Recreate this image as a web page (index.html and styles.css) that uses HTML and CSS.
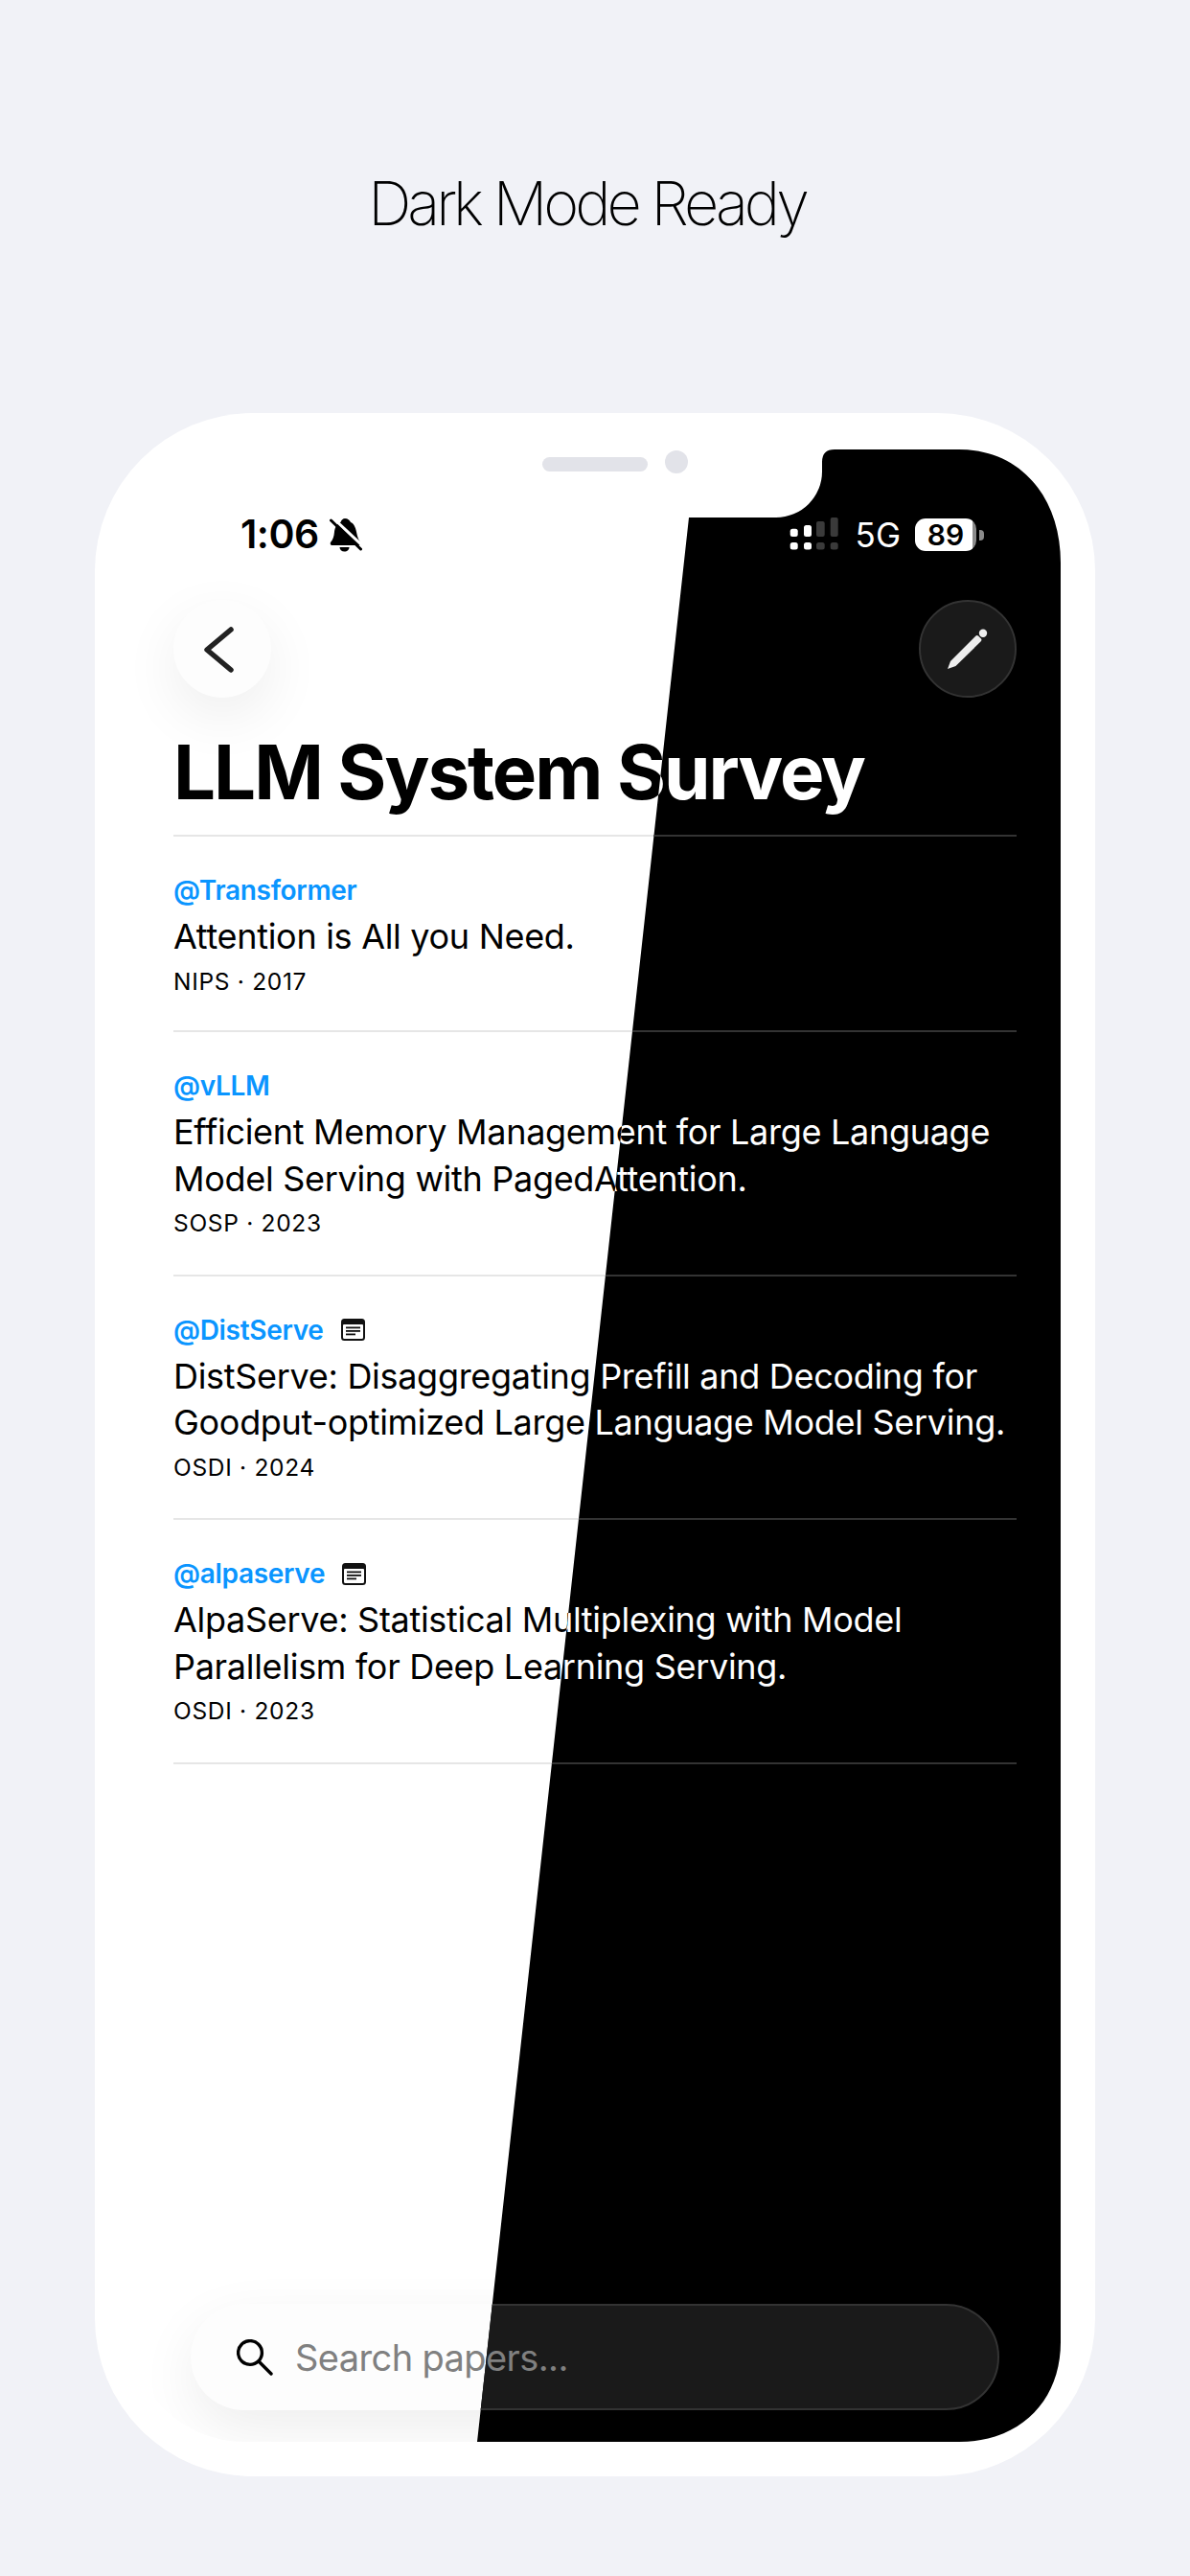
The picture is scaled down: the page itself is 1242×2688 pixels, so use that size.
FILE: index.html
```html
<!DOCTYPE html>
<html lang="en">
<head>
    <meta charset="UTF-8">
    <title>Dark Mode Ready</title>
    <link rel="stylesheet" href="styles.css">
</head>
<body>

    <h1 class="headline">Dark Mode Ready</h1>

    <div class="phone">
        <div class="speaker"></div>
        <div class="camera"></div>

        <!-- Light half -->
        <div class="screen light">
            <div class="status-bar">
                <div class="status-left">
                    <span class="clock">1:06</span>
                    <svg class="bell" viewBox="0 0 34 36"><path d="M16 1c3 0 5 2 6 4 3 1 5 5 6 10 1 5 2 8 4 11 .7 1.500 0 3-1.500 3H2.500C1 29 .3 27.500 1 26c2.500-3 3.500-6 4-11 .5-5 3-9 6.500-10 .5-2 2.500-4 4.500-4zM10.500 31h10c0 2.500-2 4.500-5 4.500s-5-2-5-4.500z"/><path class="bell-cut" d="M3.500 .5 35.500 30.500"/><path class="bell-slash" d="M1.500 3 32.500 33"/></svg>
                </div>
                <div class="status-right">
                    <svg class="signal" viewBox="0 0 51 35"><rect x="0.700" y="11.700" width="8" height="8.300" rx="2.500"/><rect x="15" y="8" width="8" height="12" rx="2.500"/><rect x="0.700" y="26" width="8" height="7.500" rx="2.500"/><rect x="15" y="26" width="8" height="7.500" rx="2.500"/><g class="signal-off"><rect x="28" y="4" width="8.700" height="16" rx="2"/><rect x="42.700" y="0" width="8" height="20" rx="2"/><rect x="28" y="26" width="8.700" height="7.500" rx="2.500"/><rect x="42.700" y="26" width="8" height="7.500" rx="2.500"/></g></svg>
                    <span class="network">5G</span>
                    <div class="battery"><span class="battery-level">89</span></div>
                </div>
            </div>
            <div class="nav">
                <div class="round-btn"><svg viewBox="0 0 102 102"><path class="chevron" d="M60 31 35 52 60 73"/></svg></div>
                <div class="round-btn"><svg viewBox="0 0 102 102"><path class="pencil" d="M30 72 33 64 59 38Q60.500 36.500 62 37.500L65 40.500Q66 42 64.500 43.500L38.500 69Z"/><circle class="pencil" cx="67" cy="34.700" r="4.200"/></svg></div>
            </div>
            <h2 class="page-title">LLM System Survey</h2>
            <div class="paper-list">
                <div class="paper">
                    <div class="handle">@Transformer</div>
                    <div class="paper-title">Attention is All you Need.</div>
                    <div class="meta">NIPS · 2017</div>
                </div>
                <div class="paper">
                    <div class="handle">@vLLM</div>
                    <div class="paper-title">Efficient Memory Management for Large Language Model Serving with PagedAttention.</div>
                    <div class="meta">SOSP · 2023</div>
                </div>
                <div class="paper">
                    <div class="handle">@DistServe <svg class="doc" viewBox="0 0 25 23"><path fill-rule="evenodd" d="M3.500 0h18A3.500 3.500 0 0 1 25 3.500v16a3.500 3.500 0 0 1-3.500 3.500h-18A3.500 3.500 0 0 1 0 19.500v-16A3.500 3.500 0 0 1 3.500 0zM3 6a1 1 0 0 0-1 1v12.500A1.500 1.500 0 0 0 3.500 21h18a1.500 1.500 0 0 0 1.500-1.500V7a1 1 0 0 0-1-1z"/><rect x="5" y="8.500" width="15" height="1.800"/><rect x="5" y="12" width="15" height="1.800"/><rect x="5" y="15.500" width="10" height="1.800"/></svg></div>
                    <div class="paper-title">DistServe: Disaggregating Prefill and Decoding for Goodput-optimized Large Language Model Serving.</div>
                    <div class="meta">OSDI · 2024</div>
                </div>
                <div class="paper">
                    <div class="handle">@alpaserve <svg class="doc" viewBox="0 0 25 23"><path fill-rule="evenodd" d="M3.500 0h18A3.500 3.500 0 0 1 25 3.500v16a3.500 3.500 0 0 1-3.500 3.500h-18A3.500 3.500 0 0 1 0 19.500v-16A3.500 3.500 0 0 1 3.500 0zM3 6a1 1 0 0 0-1 1v12.500A1.500 1.500 0 0 0 3.500 21h18a1.500 1.500 0 0 0 1.500-1.500V7a1 1 0 0 0-1-1z"/><rect x="5" y="8.500" width="15" height="1.800"/><rect x="5" y="12" width="15" height="1.800"/><rect x="5" y="15.500" width="10" height="1.800"/></svg></div>
                    <div class="paper-title">AlpaServe: Statistical Multiplexing with Model Parallelism for Deep Learning Serving.</div>
                    <div class="meta">OSDI · 2023</div>
                </div>
            </div>
            <div class="search-bar">
                <svg class="search-icon" viewBox="0 0 38 38"><circle cx="14" cy="14" r="12.400"/><path d="M23 23 36 36"/></svg>
                <span class="search-text">Search papers...</span>
            </div>
        </div>

        <!-- Dark half, same screen cut along the diagonal -->
        <div class="screen dark">
            <div class="status-bar">
                <div class="status-left">
                    <span class="clock">1:06</span>
                </div>
                <div class="status-right">
                    <svg class="signal" viewBox="0 0 51 35"><rect x="0.700" y="11.700" width="8" height="8.300" rx="2.500"/><rect x="15" y="8" width="8" height="12" rx="2.500"/><rect x="0.700" y="26" width="8" height="7.500" rx="2.500"/><rect x="15" y="26" width="8" height="7.500" rx="2.500"/><g class="signal-off"><rect x="28" y="4" width="8.700" height="16" rx="2"/><rect x="42.700" y="0" width="8" height="20" rx="2"/><rect x="28" y="26" width="8.700" height="7.500" rx="2.500"/><rect x="42.700" y="26" width="8" height="7.500" rx="2.500"/></g></svg>
                    <span class="network">5G</span>
                    <div class="battery"><span class="battery-level">89</span></div>
                </div>
            </div>
            <div class="nav">
                <div class="round-btn"></div>
                <div class="round-btn"><svg viewBox="0 0 102 102"><path class="pencil" d="M30 72 33 64 59 38Q60.500 36.500 62 37.500L65 40.500Q66 42 64.500 43.500L38.500 69Z"/><circle class="pencil" cx="67" cy="34.700" r="4.200"/></svg></div>
            </div>
            <h2 class="page-title">LLM System Survey</h2>
            <div class="paper-list">
                <div class="paper">
                    <div class="handle">@Transformer</div>
                    <div class="paper-title">Attention is All you Need.</div>
                    <div class="meta">NIPS · 2017</div>
                </div>
                <div class="paper">
                    <div class="handle">@vLLM</div>
                    <div class="paper-title">Efficient Memory Management for Large Language Model Serving with PagedAttention.</div>
                    <div class="meta">SOSP · 2023</div>
                </div>
                <div class="paper">
                    <div class="handle">@DistServe</div>
                    <div class="paper-title">DistServe: Disaggregating Prefill and Decoding for Goodput-optimized Large Language Model Serving.</div>
                    <div class="meta">OSDI · 2024</div>
                </div>
                <div class="paper">
                    <div class="handle">@alpaserve</div>
                    <div class="paper-title">AlpaServe: Statistical Multiplexing with Model Parallelism for Deep Learning Serving.</div>
                    <div class="meta">OSDI · 2023</div>
                </div>
            </div>
            <div class="search-bar">
                <span class="search-text">Search papers...</span>
            </div>
        </div>
    </div>

</body>
</html>
```

FILE: styles.css
```css
body {
    margin: 0;
    width: 1242px;
    height: 2688px;
    overflow: hidden;
    background-color: #f1f2f7;
    font-family: Inter, "Liberation Sans", sans-serif;
}

.headline {
    box-sizing: border-box;
    margin: 0;
    padding: 170px 17px 0 0;
    height: 431px;
    font-size: 63px;
    line-height: 84px;
    font-weight: 200;
    letter-spacing: -4px;
    text-align: center;
    color: #000;
}

/* Phone frame */
.phone {
    position: relative;
    box-sizing: border-box;
    width: 1044px;
    height: 2153px;
    margin: 0 auto;
    padding: 38px 36px;
    background-color: #fff;
    border-radius: 165px;
}

.speaker {
    position: absolute;
    left: 467px;
    top: 46px;
    width: 110px;
    height: 15px;
    border-radius: 8px;
    background-color: #e2e3e9;
    z-index: 3;
}

.camera {
    position: absolute;
    left: 595px;
    top: 39px;
    width: 24px;
    height: 24px;
    border-radius: 50%;
    background-color: #e2e3e9;
    z-index: 3;
}

/* Screen, shared by both halves */
.screen {
    box-sizing: border-box;
    display: flex;
    flex-direction: column;
    width: 972px;
    height: 2079px;
    padding: 71px 46px 33px;
    overflow: hidden;
    border-radius: 120px;
}

.light {
    position: relative;
    color: #000;
    background-color: #fff;
    --btn-bg: #fdfdfd;
    --btn-border: transparent;
    --line: #e6e6e6;
    --btn-shadow: 0 20px 60px rgba(0, 0, 0, 0.07);
    --bar-shadow: 0 20px 60px rgba(0, 0, 0, 0.07);
}

.dark {
    position: absolute;
    left: 36px;
    top: 38px;
    color: #fff;
    background-color: #000;
    --btn-bg: #1a1a1a;
    --btn-border: #333;
    --line: #333;
    --btn-shadow: none;
    --bar-shadow: none;
    border-radius: 0;
    clip-path: path("M584 71 L675 71 A48 48 0 0 0 723 23 L723 13 Q723 0 736 0 L866 0 C932 0 972 52 972 118 L972 1975 C972 2036 930 2079 866 2079 L363 2079 Z");
}

/* Status bar */
.status-bar {
    display: flex;
    justify-content: space-between;
    align-items: center;
    height: 35px;
    padding: 0 34px 0 70px;
}

.status-left, .status-right {
    display: flex;
    align-items: center;
}

.clock {
    font-size: 41px;
    font-weight: 600;
    line-height: 35px;
    letter-spacing: -0.5px;
}

.bell {
    width: 34px;
    height: 36px;
    margin-left: 11px;
    fill: currentColor;
}

.bell-cut {
    stroke: #fff;
    stroke-width: 3;
    fill: none;
}

.bell-slash {
    stroke: #000;
    stroke-width: 3;
    stroke-linecap: round;
    fill: none;
}

.signal {
    width: 51px;
    height: 35px;
    fill: currentColor;
}

.signal-off {
    fill: #3a3a3a;
}

.network {
    margin-left: 18px;
    font-size: 35px;
    font-weight: 400;
}

.battery {
    position: relative;
    width: 64px;
    height: 34px;
    margin: 0 8px 0 15px;
    border-radius: 11px;
    background: linear-gradient(to right, #fff 93%, #8a8a8a 93%);
    color: #000;
    text-align: center;
}

.battery::after {
    content: "";
    position: absolute;
    right: -8px;
    top: 12px;
    width: 5px;
    height: 11px;
    border-radius: 0 4px 4px 0;
    background-color: #8a8a8a;
}

.battery-level {
    display: block;
    font-size: 30px;
    font-weight: 600;
    line-height: 34px;
}

/* Navigation buttons */
.nav {
    display: flex;
    justify-content: space-between;
    margin-top: 51px;
}

.round-btn {
    box-sizing: border-box;
    width: 102px;
    height: 102px;
    border-radius: 50%;
    background-color: var(--btn-bg);
    border: 2px solid var(--btn-border);
    box-shadow: var(--btn-shadow);
}

.round-btn svg {
    display: block;
    margin: -2px;
    width: 102px;
    height: 102px;
}

.chevron {
    fill: none;
    stroke: #222;
    stroke-width: 5.500;
    stroke-linecap: round;
    stroke-linejoin: round;
}

.pencil {
    fill: #eee;
}

.page-title {
    margin: 31px 0 0;
    height: 112px;
    font-size: 78px;
    font-weight: 700;
    line-height: 94px;
    letter-spacing: -2px;
}

/* Paper list */
.paper-list {
    border-top: 2px solid var(--line);
}

.paper {
    box-sizing: border-box;
    padding: 39px 0 0;
    height: 254.500px;
    border-bottom: 2px solid var(--line);
}

.paper:first-child {
    height: 204px;
}

.handle {
    display: flex;
    align-items: center;
    font-size: 28px;
    font-weight: 600;
    line-height: 34px;
    letter-spacing: -0.3px;
    color: #0a95ff;
}

.doc {
    width: 25px;
    height: 23px;
    margin-left: 18px;
    fill: #111;
}

.paper-title {
    margin-top: 7px;
    font-size: 36px;
    line-height: 48.500px;
    letter-spacing: -0.3px;
}

.meta {
    margin-top: 5px;
    font-size: 24.500px;
    line-height: 34px;
    letter-spacing: 0.7px;
}

/* Search bar */
.search-bar {
    display: flex;
    align-items: center;
    box-sizing: border-box;
    height: 111px;
    margin: auto 18px 0;
    padding-left: 46px;
    border-radius: 56px;
    background-color: var(--btn-bg);
    border: 2px solid var(--btn-border);
    box-shadow: var(--bar-shadow);
}

.search-icon {
    width: 38px;
    height: 38px;
    margin-right: 23px;
    fill: none;
    stroke: #000;
    stroke-width: 3.400;
    stroke-linecap: round;
}

.dark .search-text {
    margin-left: 61px;
}

.search-text {
    font-size: 38px;
    letter-spacing: -0.6px;
    color: #808080;
}
```
